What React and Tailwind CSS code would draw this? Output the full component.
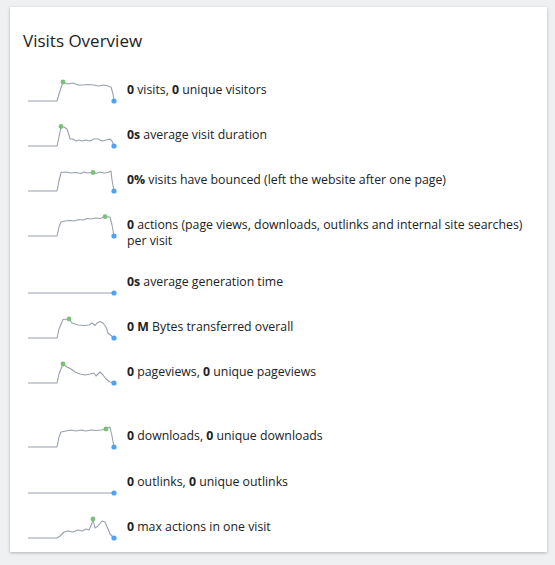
import React from 'react';

// sparkline points are in svg pixels; flat baseline sits at y=25
const rows = [
  {
    pts: '2,25 31,25 33,18 37,6 42,8 47,7 52,9 57,9 62,8.5 68,9 72,10 78,9 82,10 85,11 87,18 88,25',
    green: [37, 6],
    text: (<><b>0</b> visits, <b>0</b> unique visitors</>),
    gap: 'mb-[17px]',
  },
  {
    pts: '2,25 31,25 33,16 35,6 38,6 41,8 43,14 44,18 47,18 50,20 53,19 56,20 60,19 64,20 68,18 72,18 76,20 80,19 84,18 86,20 88,25',
    green: [35, 5.5],
    text: (<><b>0s</b> average visit duration</>),
    gap: 'mb-[17px]',
  },
  {
    pts: '2,25 31,25 33,15 35,6.5 40,6 45,7 50,6.5 55,7.5 58,6 62,7 66,6.5 70,7.5 74,6 78,7 82,6.5 85,5 86,14 88,25',
    green: [67, 6.5],
    text: (<><b>0%</b> visits have bounced (left the website after one page)</>),
    gap: 'mb-[17px]',
  },
  {
    pts: '2,25 31,25 33,16 35,11 39,10 44,9.5 48,10 53,8.5 57,9 61,7.5 65,8 70,7 74,7.5 79,5.7 84,6 86,14 88,25',
    green: [79, 5.7],
    text: (<><b>0</b> actions (page views, downloads, outlinks and internal site searches) per visit</>),
    gap: 'mb-[19px]',
  },
  {
    pts: '2,25 88,25',
    green: null,
    text: (<><b>0s</b> average generation time</>),
    gap: 'mb-[17px]',
  },
  {
    pts: '2,25 31,25 33,16 37,6.5 43,6 46,10 52,12 58,12.5 63,12 66,10 69,12.5 71,10 74,8.5 77,10 80,14 82,20 88,25',
    green: [43, 6],
    text: (<><b>0 M</b> Bytes transferred overall</>),
    gap: 'mb-[17px]',
  },
  {
    pts: '2,25 31,25 33,16 37,6 41,9 45,11 49,14 54,16 59,17 64,16 68,15 70,18 74,14 77,17 80,21 84,24 88,25',
    green: [37, 6],
    text: (<><b>0</b> pageviews, <b>0</b> unique pageviews</>),
    gap: 'mb-[36px]',
  },
  {
    pts: '2,25 31,25 33,15 35,10 40,9 45,8 50,9 55,8 60,9 65,8 70,8.5 75,8 80,7 84,5 86,14 88,25',
    green: [80, 7],
    text: (<><b>0</b> downloads, <b>0</b> unique downloads</>),
    gap: 'mb-[18px]',
  },
  {
    pts: '2,25 88,25',
    green: null,
    text: (<><b>0</b> outlinks, <b>0</b> unique outlinks</>),
    gap: 'mb-[17px]',
  },
  {
    pts: '2,25 31,25 34,23 38,19 42,18 47,19 52,17 56,18 60,16 63,17 66,10 67,6 69,15 72,13 76,8 79,9 82,16 84,21 88,25',
    green: [67, 6],
    text: (<><b>0</b> max actions in one visit</>),
    gap: '',
  },
];

const Sparkline = ({ pts, green }) => (
  <svg width="92" height="28" viewBox="0 0 92 28" className="shrink-0">
    <polyline points={pts} fill="none" stroke="#99a1ad" strokeWidth="1.1" strokeLinejoin="round" />
    {green && <circle cx={green[0]} cy={green[1]} r="2.4" fill="#79c178" />}
    <circle cx="88" cy="25" r="2.6" fill="#4da3f7" />
  </svg>
);

const App = () => {
  return (
    <div
      className="w-[555px] h-[565px] bg-[#eff0f2] pt-[7px] pl-[10px]"
      style={{ fontFamily: '"Open Sans", "Noto Sans", sans-serif' }}
    >
      <div className="w-[537px] h-[545px] bg-white shadow-[0_1px_3px_rgba(0,0,0,0.25)] pl-[13px] pt-[23px]">
        <h2 className="text-[17px] leading-[22px] text-[#222] mb-[24px]">Visits Overview</h2>
        <div className="pl-[3px]">
          {rows.map((r, i) => (
            <div key={i} className={`flex items-start ${r.gap}`}>
              <Sparkline pts={r.pts} green={r.green} />
              <div className="ml-[9px] pt-[6px] max-w-[405px] text-[12.3px] leading-[16px] text-[#222] [&_b]:font-bold">
                {r.text}
              </div>
            </div>
          ))}
        </div>
      </div>
    </div>
  );
};

export default App;
